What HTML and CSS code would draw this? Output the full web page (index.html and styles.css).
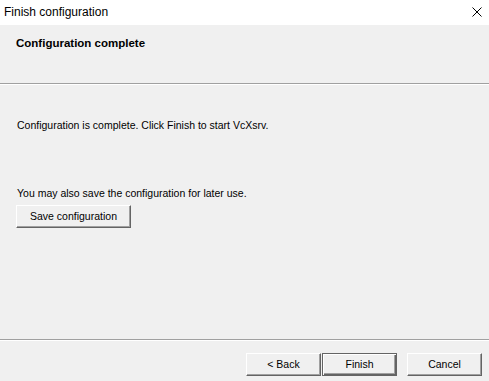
FILE: index.html
```html
<!DOCTYPE html>
<html lang="en">
<head>
    <meta charset="UTF-8">
    <title>Finish configuration</title>
    <link rel="stylesheet" href="styles.css">
</head>
<body>
    <div class="window">
        <div class="titlebar">
            <span class="title">Finish configuration</span>
            <svg class="close" width="10" height="10" viewBox="0 0 10 10">
                <path d="M0.5 0.5 L9.5 9.5 M9.5 0.5 L0.5 9.5" stroke="#000" stroke-width="1" fill="none"/>
            </svg>
        </div>

        <div class="header">
            <h3>Configuration complete</h3>
        </div>
        <div class="sep"></div>

        <div class="content">
            <p class="intro">Configuration is complete. Click Finish to start VcXsrv.</p>
            <p class="save-note">You may also save the configuration for later use.</p>
            <button type="button" class="btn save">Save configuration</button>
        </div>

        <div class="sep"></div>
        <div class="footer">
            <button type="button" class="btn">&lt; Back</button>
            <button type="button" class="btn default">Finish</button>
            <button type="button" class="btn cancel">Cancel</button>
        </div>
    </div>
</body>
</html>
```

FILE: styles.css
```css
body {
    margin: 0;
    font-family: "Liberation Sans", Arial, sans-serif;
    font-size: 10.5px;
    color: #000;
    background: #f0f0f0;
}

.window {
    display: flex;
    flex-direction: column;
    height: 381px;
    width: 489px;
}

.titlebar {
    height: 25px;
    background: #fff;
    display: flex;
    align-items: center;
    justify-content: space-between;
    padding: 0 6px 1px 4px;
    box-sizing: border-box;
}

.title {
    font-size: 12px;
}

.close {
    margin-right: 1px;
}

.header {
    height: 58px;
    padding-left: 16px;
    box-sizing: border-box;
}

.header h3 {
    margin: 0;
    padding-top: 11px;
    font-size: 11.5px;
    font-weight: bold;
    line-height: 14px;
}

.sep {
    border-top: 1px solid #a0a0a0;
    border-bottom: 1px solid #fff;
}

.content {
    flex: 1;
    padding-left: 17px;
}

.content p {
    margin: 0;
    line-height: 13px;
}

.intro {
    padding-top: 34px;
}

.save-note {
    margin-top: 55px !important;
}

.btn {
    font-family: "Liberation Sans", Arial, sans-serif;
    font-size: 10.5px;
    color: #000;
    background: #f0f0f0;
    height: 23px;
    width: 75px;
    padding: 0 0 2px;
    border: 1px solid;
    border-color: #fff #646464 #646464 #fff;
    box-shadow: inset -1px -1px #a0a0a0;
    box-sizing: border-box;
}

.save {
    margin-top: 5px;
    margin-left: -1px;
    width: 115px;
}

.footer {
    display: flex;
    justify-content: flex-end;
    padding: 12px 7px 5px 0;
}

.btn.default {
    margin-left: 1px;
    border-color: #646464;
    box-shadow: inset 1px 1px #fff, inset -1px -1px #646464, inset -2px -2px #a0a0a0;
}

.btn.cancel {
    margin-left: 10px;
}
```
